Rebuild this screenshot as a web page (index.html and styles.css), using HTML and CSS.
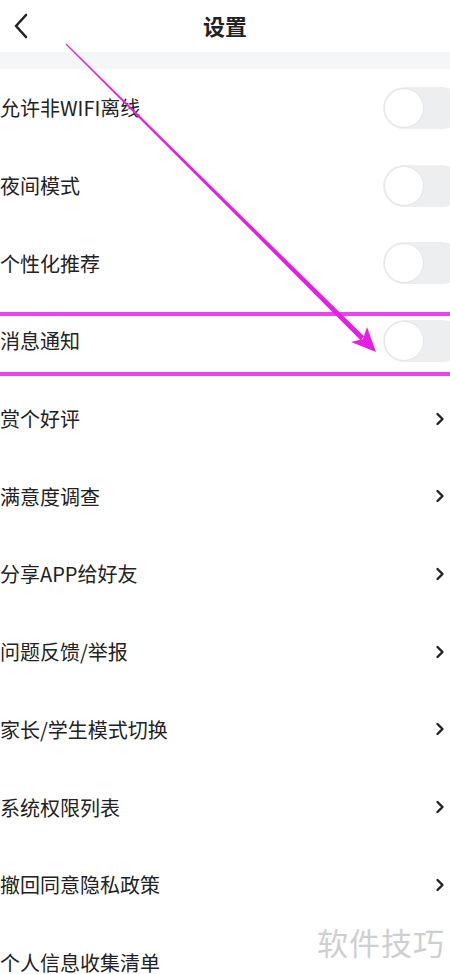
FILE: index.html
```html
<!DOCTYPE html>
<html lang="zh">
  <head>
    <meta charset="UTF-8" />
    <meta name="viewport" content="width=device-width, initial-scale=1.0" />
    <title>设置</title>
    <link rel="stylesheet" href="styles.css">
  </head>
  <body>
    <header class="topbar">
      <span class="back">
        <svg width="16" height="26" viewBox="0 0 16 26">
          <path d="M13 2 L3 13 L13 24" fill="none" stroke="#222" stroke-width="2.6" stroke-linecap="round" stroke-linejoin="round" />
        </svg>
      </span>
      <h1 class="title">设置</h1>
    </header>
    <div class="gap"></div>

    <ul class="settings">
      <li class="row"><span class="label">允许非WIFI离线</span><span class="switch"><span class="knob"></span></span></li>
      <li class="row"><span class="label">夜间模式</span><span class="switch"><span class="knob"></span></span></li>
      <li class="row"><span class="label">个性化推荐</span><span class="switch"><span class="knob"></span></span></li>
      <li class="row"><span class="label">消息通知</span><span class="switch"><span class="knob"></span></span></li>
      <li class="row"><span class="label">赏个好评</span><span class="chev"></span></li>
      <li class="row"><span class="label">满意度调查</span><span class="chev"></span></li>
      <li class="row"><span class="label">分享APP给好友</span><span class="chev"></span></li>
      <li class="row"><span class="label">问题反馈/举报</span><span class="chev"></span></li>
      <li class="row"><span class="label">家长/学生模式切换</span><span class="chev"></span></li>
      <li class="row"><span class="label">系统权限列表</span><span class="chev"></span></li>
      <li class="row"><span class="label">撤回同意隐私政策</span><span class="chev"></span></li>
      <li class="row"><span class="label">个人信息收集清单</span></li>
    </ul>

    <div class="watermark">软件技巧</div>

    <!-- annotation overlay -->
    <svg class="annot" width="450" height="974" viewBox="0 0 450 974">
      <rect x="0" y="312" width="450" height="4" fill="#f040ee" />
      <rect x="0" y="372" width="450" height="4" fill="#f040ee" />
      <polygon points="66.4,43.6 65.6,44.4 360.6,340.2 364.2,336.6" fill="#e41ee4" />
      <polygon points="376,352 367,327 363,339 351,342" fill="#e41ee4" />
    </svg>

    <script>
      // chevrons
      document.querySelectorAll(".chev").forEach((el) => {
        el.innerHTML =
          '<svg width="10" height="16" viewBox="0 0 10 16"><path d="M2.5 3 L7.5 8 L2.5 13" fill="none" stroke="#222" stroke-width="2.4" stroke-linecap="round" stroke-linejoin="round"/></svg>';
      });
    </script>
  </body>
</html>
```

FILE: styles.css
```css
* {
  margin: 0;
  padding: 0;
  box-sizing: border-box;
}

html,
body {
  width: 450px;
  height: 974px;
  overflow: hidden;
}

body {
  font-family: "Noto Sans CJK SC", "Noto Sans", sans-serif;
  background-color: #fff;
  color: #222;
  position: relative;
}

.topbar {
  height: 52px;
  display: flex;
  align-items: center;
  justify-content: center;
  position: relative;
}

.back {
  position: absolute;
  left: 13px;
  top: 13px;
  display: flex;
}

.title {
  font-size: 22px;
  font-weight: bold;
  color: #222;
  margin-top: -3px;
}

.gap {
  height: 17px;
  background-color: #f5f6f8;
}

.settings {
  list-style: none;
}

.row {
  height: 77.7px;
  display: flex;
  align-items: center;
  justify-content: space-between;
}

.label {
  font-size: 20px;
  color: #222;
}

.switch {
  width: 80px;
  height: 42px;
  border-radius: 21px;
  background-color: #eceef0;
  margin-right: -13px;
  display: flex;
  align-items: center;
  padding-left: 1px;
}

.knob {
  width: 40px;
  height: 40px;
  border-radius: 50%;
  background-color: #fff;
  border: 1px solid #e4e5e7;
}

.chev {
  display: flex;
  margin-right: 5px;
}

.watermark {
  position: absolute;
  right: 5px;
  top: 919px;
  font-size: 31px;
  color: #cfcfcf;
  letter-spacing: 1px;
}

.annot {
  position: absolute;
  left: 0;
  top: 0;
  pointer-events: none;
}
```
